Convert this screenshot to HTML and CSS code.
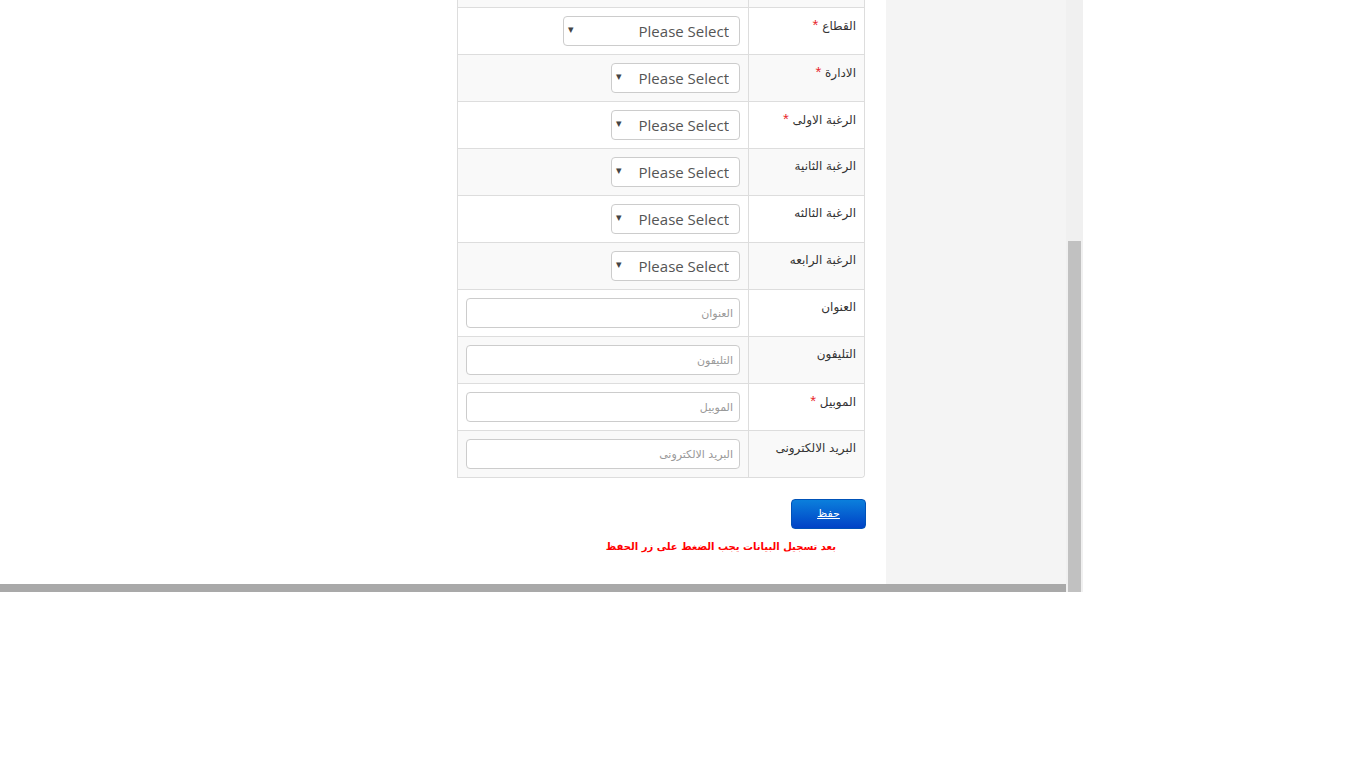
FILE: index.html
```html
<!DOCTYPE html>
<html>
<head>
    <meta charset="utf-8">
    <title>طلب التحاق</title>
    <link rel="stylesheet" href="styles.css">
</head>
<body>

    <div class="frame">
        <div class="page">
            <div class="content">
                <div class="main">
                    <table class="form-table" dir="rtl">
                        <tbody>
                            <tr>
                                <td class="label"></td>
                                <td class="field"></td>
                            </tr>
                            <tr>
                                <td class="label">القطاع <span class="req">*</span></td>
                                <td class="field">
                                    <span class="pick wide"><select><option>Please Select</option></select></span>
                                </td>
                            </tr>
                            <tr>
                                <td class="label">الادارة <span class="req">*</span></td>
                                <td class="field">
                                    <span class="pick"><select><option>Please Select</option></select></span>
                                </td>
                            </tr>
                            <tr>
                                <td class="label">الرغبة الاولى <span class="req">*</span></td>
                                <td class="field">
                                    <span class="pick"><select><option>Please Select</option></select></span>
                                </td>
                            </tr>
                            <tr>
                                <td class="label">الرغبة الثانية</td>
                                <td class="field">
                                    <span class="pick"><select><option>Please Select</option></select></span>
                                </td>
                            </tr>
                            <tr>
                                <td class="label">الرغبة الثالثه</td>
                                <td class="field">
                                    <span class="pick"><select><option>Please Select</option></select></span>
                                </td>
                            </tr>
                            <tr>
                                <td class="label">الرغبة الرابعه</td>
                                <td class="field">
                                    <span class="pick"><select><option>Please Select</option></select></span>
                                </td>
                            </tr>
                            <tr>
                                <td class="label">العنوان</td>
                                <td class="field"><input type="text" placeholder="العنوان"></td>
                            </tr>
                            <tr>
                                <td class="label">التليفون</td>
                                <td class="field"><input type="text" placeholder="التليفون"></td>
                            </tr>
                            <tr>
                                <td class="label">الموبيل <span class="req">*</span></td>
                                <td class="field"><input type="text" placeholder="الموبيل"></td>
                            </tr>
                            <tr>
                                <td class="label">البريد الالكترونى</td>
                                <td class="field"><input type="text" placeholder="البريد الالكترونى"></td>
                            </tr>
                        </tbody>
                    </table>

                    <div class="actions">
                        <a href="#" class="save-btn">حفظ</a>
                    </div>
                    <p class="note" dir="rtl">بعد تسجيل البيانات يجب الضغط على زر الحفظ</p>
                </div>
                <div class="side"></div>
            </div>
            <div class="hbar"></div>
        </div>
        <div class="vscroll">
            <div class="thumb"></div>
        </div>
    </div>

</body>
</html>
```

FILE: styles.css
```css
body {
    margin: 0;
    background: #fff;
    font-family: "DejaVu Sans", sans-serif;
    font-size: 12px;
    color: #333;
}

.frame {
    display: flex;
    width: 1083px;
    height: 592px;
    overflow: hidden;
}

.page {
    width: 1066px;
    display: flex;
    flex-direction: column;
}

.content {
    flex: 1;
    display: flex;
    overflow: hidden;
}

.main {
    width: 886px;
    background: #fff;
}

.side {
    flex: 1;
    background: #f4f4f4;
}

.hbar {
    height: 8px;
    background: #a9a9a9;
}

.vscroll {
    width: 17px;
    background: #f0f0f0;
}

.thumb {
    width: 13px;
    height: 351px;
    margin: 241px 0 0 2px;
    background: #c1c1c1;
}

/* form table */

.form-table {
    margin: -40px 0 0 457px;
    width: 408px;
    border-collapse: separate;
    border-spacing: 0;
    border: 1px solid #ddd;
    border-top: none;
    border-radius: 0 0 4px 0;
}

.form-table td {
    height: 30px;
    padding: 8px;
    border-top: 1px solid #ddd;
    vertical-align: top;
    line-height: 14px;
}

.form-table tr:nth-child(odd) td {
    background: #f9f9f9;
}

.form-table tr:last-child td:first-child {
    border-bottom-right-radius: 4px;
}

.form-table td.label {
    width: 99px;
    padding-top: 10px;
    padding-bottom: 6px;
    border-left: 1px solid #ddd;
    font-size: 12px;
    color: #333;
    text-align: right;
    white-space: nowrap;
}

.req {
    color: #e8272c;
    font-family: "Liberation Sans", sans-serif;
    font-size: 15px;
}

.form-table td.field {
    text-align: right;
}

.pick {
    position: relative;
    display: inline-block;
    vertical-align: top;
    width: 129px;
    height: 30px;
}

.pick.wide {
    width: 177px;
}

.pick select {
    appearance: none;
    -webkit-appearance: none;
    width: 100%;
    height: 30px;
    padding: 0 10px 0 20px;
    border: 1px solid #ccc;
    border-radius: 4px;
    background: #fff;
    font-family: "Open Sans", sans-serif;
    font-size: 15px;
    color: #555;
    direction: rtl;
}

.pick::after {
    content: "\25BE";
    position: absolute;
    left: 5px;
    top: 7px;
    font-size: 11px;
    line-height: 14px;
    color: #444;
    pointer-events: none;
}

.field input {
    box-sizing: border-box;
    vertical-align: top;
    width: 274px;
    height: 30px;
    padding: 0 6px;
    border: 1px solid #ccc;
    border-radius: 4px;
    direction: rtl;
    font-family: "DejaVu Sans", sans-serif;
    font-size: 11px;
}

.field input::placeholder {
    color: #999;
}

/* actions */

.actions {
    display: flex;
    justify-content: flex-end;
    width: 866px;
    margin-top: 21px;
}

.save-btn {
    display: block;
    width: 75px;
    height: 30px;
    box-sizing: border-box;
    line-height: 28px;
    text-align: center;
    color: #fff;
    font-size: 11px;
    border: 1px solid #0052b8;
    border-radius: 4px;
    background: linear-gradient(#0b7fdc, #0042c6);
}

.note {
    width: 836px;
    margin: 12px 0 0;
    text-align: right;
    color: #ff0000;
    font-weight: bold;
    font-size: 10px;
}
```
